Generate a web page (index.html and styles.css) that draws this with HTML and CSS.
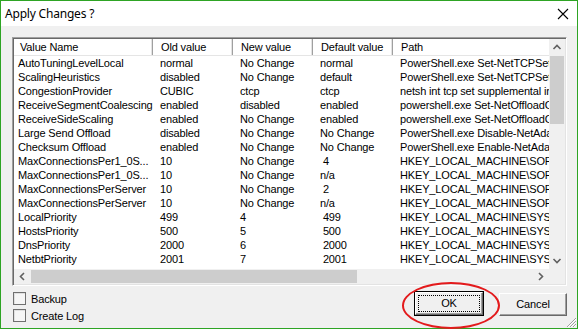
FILE: index.html
```html
<!DOCTYPE html>
<html lang="en">
<head>
    <meta charset="UTF-8">
    <title>Apply Changes ?</title>
    <link rel="stylesheet" href="styles.css">
</head>
<body>
    <div class="window">
        <div class="titlebar">
            <span class="title">Apply Changes ?</span>
            <svg class="close" width="12" height="12" viewBox="0 0 12 12">
                <path d="M1 1 L11 11 M11 1 L1 11" stroke="#000" stroke-width="1.1" fill="none"/>
            </svg>
        </div>
        <div class="client">
            <div class="list">
                <div class="view">
                    <div class="rows">
                        <div class="row head">
                            <span>Value Name</span><span>Old value</span><span>New value</span><span>Default value</span><span>Path</span>
                        </div>
                        <div class="row"><span>AutoTuningLevelLocal</span><span>normal</span><span>No Change</span><span>normal</span><span>PowerShell.exe Set-NetTCPSetting -AutoTuningLevelLocal</span></div>
                        <div class="row"><span>ScalingHeuristics</span><span>disabled</span><span>No Change</span><span>default</span><span>PowerShell.exe Set-NetTCPSetting -ScalingHeuristics</span></div>
                        <div class="row"><span>CongestionProvider</span><span>CUBIC</span><span>ctcp</span><span>ctcp</span><span>netsh int tcp set supplemental internet congestionprovider</span></div>
                        <div class="row"><span>ReceiveSegmentCoalescing</span><span>enabled</span><span>disabled</span><span>enabled</span><span>powershell.exe Set-NetOffloadGlobalSetting -ReceiveSegmentCoalescing</span></div>
                        <div class="row"><span>ReceiveSideScaling</span><span>enabled</span><span>No Change</span><span>enabled</span><span>powershell.exe Set-NetOffloadGlobalSetting -ReceiveSideScaling</span></div>
                        <div class="row"><span>Large Send Offload</span><span>disabled</span><span>No Change</span><span>No Change</span><span>PowerShell.exe Disable-NetAdapterLso</span></div>
                        <div class="row"><span>Checksum Offload</span><span>enabled</span><span>No Change</span><span>No Change</span><span>PowerShell.exe Enable-NetAdapterChecksumOffload</span></div>
                        <div class="row"><span>MaxConnectionsPer1_0S...</span><span>10</span><span>No Change</span><span> 4</span><span>HKEY_LOCAL_MACHINE\SOFTWARE\Microsoft\Internet Explorer</span></div>
                        <div class="row"><span>MaxConnectionsPer1_0S...</span><span>10</span><span>No Change</span><span>n/a</span><span>HKEY_LOCAL_MACHINE\SOFTWARE\Wow6432Node\Microsoft</span></div>
                        <div class="row"><span>MaxConnectionsPerServer</span><span>10</span><span>No Change</span><span> 2</span><span>HKEY_LOCAL_MACHINE\SOFTWARE\Microsoft\Internet Explorer</span></div>
                        <div class="row"><span>MaxConnectionsPerServer</span><span>10</span><span>No Change</span><span>n/a</span><span>HKEY_LOCAL_MACHINE\SOFTWARE\Wow6432Node\Microsoft</span></div>
                        <div class="row"><span>LocalPriority</span><span>499</span><span>4</span><span> 499</span><span>HKEY_LOCAL_MACHINE\SYSTEM\CurrentControlSet\Services</span></div>
                        <div class="row"><span>HostsPriority</span><span>500</span><span>5</span><span> 500</span><span>HKEY_LOCAL_MACHINE\SYSTEM\CurrentControlSet\Services</span></div>
                        <div class="row"><span>DnsPriority</span><span>2000</span><span>6</span><span> 2000</span><span>HKEY_LOCAL_MACHINE\SYSTEM\CurrentControlSet\Services</span></div>
                        <div class="row"><span>NetbtPriority</span><span>2001</span><span>7</span><span> 2001</span><span>HKEY_LOCAL_MACHINE\SYSTEM\CurrentControlSet\Services</span></div>
                    </div>
                    <div class="vscroll">
                        <svg class="arrow" width="16" height="17" viewBox="0 0 16 17">
                            <path d="M4.5 10 L8 6.5 L11.5 10" stroke="#606060" stroke-width="1.6" fill="none"/>
                        </svg>
                        <div class="vthumb"></div>
                        <div class="vtrack"></div>
                        <svg class="arrow" width="16" height="17" viewBox="0 0 16 17">
                            <path d="M4.5 7 L8 10.5 L11.5 7" stroke="#606060" stroke-width="1.6" fill="none"/>
                        </svg>
                    </div>
                </div>
                <div class="hbar">
                    <div class="hscroll">
                        <svg class="arrow" width="17" height="15" viewBox="0 0 17 15">
                            <path d="M10 4 L6.5 7.5 L10 11" stroke="#606060" stroke-width="1.6" fill="none"/>
                        </svg>
                        <div class="hthumb"></div>
                        <div class="htrack"></div>
                        <svg class="arrow" width="17" height="15" viewBox="0 0 17 15">
                            <path d="M7 4 L10.5 7.5 L7 11" stroke="#606060" stroke-width="1.6" fill="none"/>
                        </svg>
                    </div>
                    <div class="corner"></div>
                </div>
            </div>
            <div class="footer">
                <div class="checks">
                    <label class="check"><span class="box"></span>Backup</label>
                    <label class="check"><span class="box"></span>Create Log</label>
                </div>
                <div class="buttons">
                    <div class="button default"><span class="focus">OK</span></div>
                    <div class="button">Cancel</div>
                </div>
            </div>
            <div class="circle"></div>
            <svg class="grip" width="12" height="12" viewBox="0 0 12 12">
                <path d="M11 2 L2 11 M11 5 L5 11 M11 8 L8 11" stroke="#a0a0a0" stroke-width="1" fill="none"/>
                <path d="M11 3 L3 11 M11 6 L6 11 M11 9 L9 11" stroke="#fff" stroke-width="1" fill="none"/>
            </svg>
        </div>
    </div>
</body>
</html>
```

FILE: styles.css
```css
body {
    margin: 0;
    font-family: "Liberation Sans", Arial, sans-serif;
    font-size: 11px;
    letter-spacing: -0.15px;
    color: #000;
}
.window {
    width: 576px;
    height: 327px;
    border: 1px solid #2ea424;
    background: #f0f0f0;
    display: flex;
    flex-direction: column;
}
.titlebar {
    height: 25px;
    background: #fff;
    display: flex;
    align-items: center;
    justify-content: space-between;
    padding: 0 8px 0 4px;
}
.title {
    font-family: "Noto Sans", sans-serif;
    font-size: 12px;
    letter-spacing: -0.2px;
}
.close {
    display: block;
}
.client {
    position: relative;
    flex: 1;
    padding: 11px 10px 0 11px;
}
.list {
    width: 551px;
    height: 245px;
    border: 1px solid #a0a0a0;
    border-right-color: #fff;
    border-bottom-color: #fff;
    box-shadow: inset 1px 1px 0 #696969, inset -1px -1px 0 #e3e3e3;
    padding: 1px;
    display: flex;
    flex-direction: column;
}
.view {
    flex: 1;
    display: flex;
    min-height: 0;
}
.rows {
    flex: 1;
    background: #fff;
    overflow: hidden;
}
.row {
    display: grid;
    grid-template-columns: 139px 80px 80px 80px 300px;
    height: 14px;
    line-height: 14px;
    white-space: pre;
}
.row span {
    overflow: hidden;
    padding-left: 7px;
}
.row span:first-child {
    padding-left: 4px;
}
.row.head {
    height: 16px;
    line-height: 16px;
    border-bottom: 1px solid #e5e5e5;
    background: #fff;
}
.row.head span {
    padding-left: 8px;
    border-right: 1px solid #a0a0a0;
    box-shadow: inset -1px 0 0 #e3e3e3;
}
.row.head span:first-child {
    padding-left: 6px;
}
.vscroll {
    width: 16px;
    display: flex;
    flex-direction: column;
    background: #f0f0f0;
}
.arrow {
    display: block;
    flex: none;
}
.vthumb {
    height: 68px;
    margin: 0 1px;
    background: #cdcdcd;
}
.vtrack {
    flex: 1;
}
.hbar {
    height: 15px;
    display: flex;
}
.hscroll {
    flex: 1;
    display: flex;
    background: #f0f0f0;
}
.hthumb {
    width: 326px;
    margin: 1px 0;
    background: #cdcdcd;
}
.htrack {
    flex: 1;
}
.corner {
    width: 16px;
    background: #f0f0f0;
}
.footer {
    display: flex;
    justify-content: space-between;
    padding-top: 6px;
}
.checks {
    display: flex;
    flex-direction: column;
    gap: 4px;
    padding-left: 1px;
}
.check {
    display: flex;
    align-items: center;
    height: 13px;
    gap: 5px;
}
.box {
    width: 11px;
    height: 11px;
    border: 1px solid #707070;
    background: #f6f6f6;
    box-shadow: inset 1px 1px 0 #e0e0e0;
}
.buttons {
    display: flex;
    gap: 16px;
    padding-top: 1px;
}
.button {
    width: 66px;
    height: 21px;
    line-height: 21px;
    text-align: center;
    font-size: 11px;
    background: #f0f0f0;
    border: 1px solid #fff;
    border-right-color: #696969;
    border-bottom-color: #696969;
    box-shadow: inset -1px -1px 0 #a0a0a0;
}
.button.default {
    outline: 1px solid #000;
    display: flex;
    padding: 2px;
    box-sizing: border-box;
    width: 68px;
    height: 23px;
    margin-top: -1px;
}
.focus {
    flex: 1;
    line-height: 15px;
    border: 1px dotted #000;
}
.circle {
    position: absolute;
    left: 401px;
    top: 256px;
    width: 94px;
    height: 43px;
    border: 2px solid #e31a1c;
    border-radius: 50%;
}
.grip {
    position: absolute;
    right: 0;
    bottom: 0;
}
```
